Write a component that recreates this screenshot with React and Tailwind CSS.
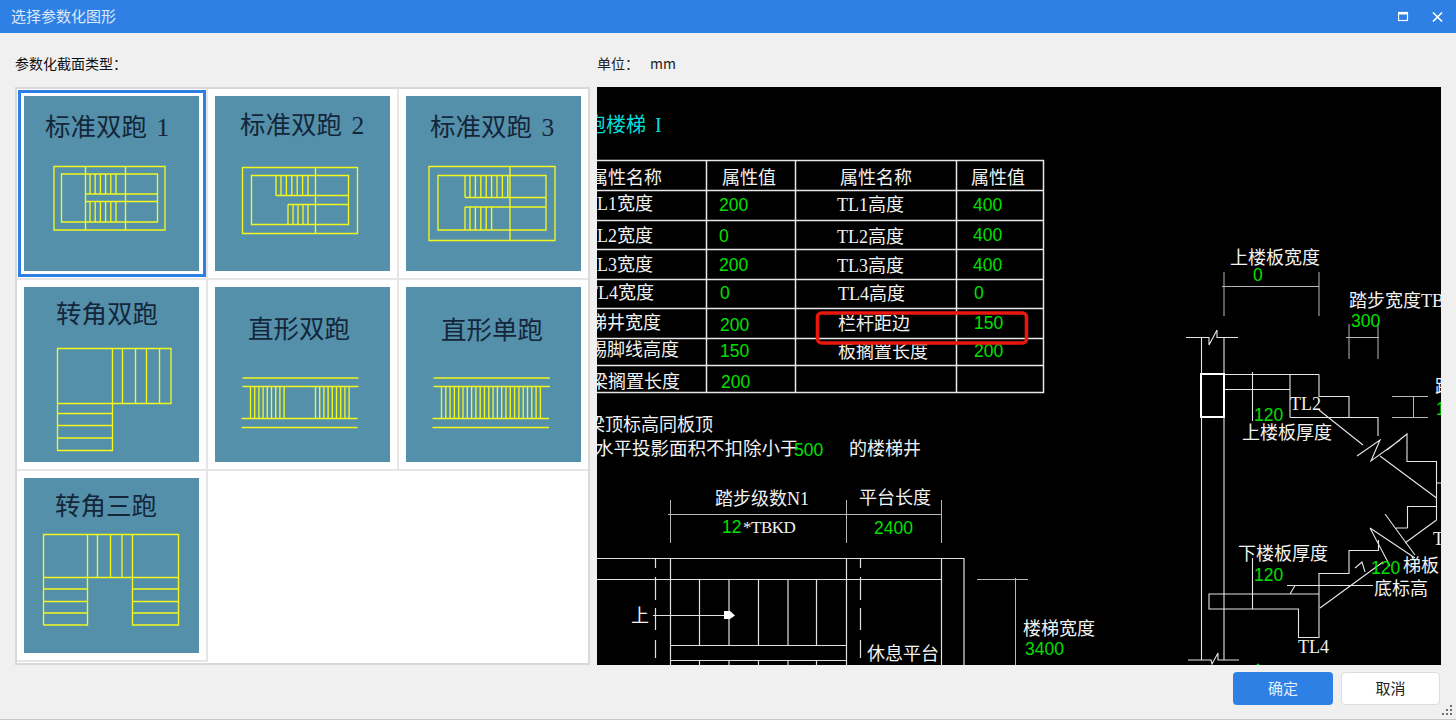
import React from "react";

const range = (start, step, n) => Array.from({ length: n }, (_, i) => start + i * step);
const h = (y, x1, x2) => `M${x1} ${y}H${x2}`;
const v = (x, y1, y2) => `M${x} ${y1}V${y2}`;
const rect = (x1, y1, x2, y2) => `M${x1} ${y1}H${x2}V${y2}H${x1}Z`;

// stair thumbnails, coordinates are inside the 175x175 picture
const THUMBS = [
  {
    title: "标准双跑 1",
    x: 21,
    y: 40,
    lines: [
      rect(30, 70.5, 141, 134),
      rect(37.5, 78, 133.5, 126),
      v(61.5, 70.5, 134),
      v(101.5, 70.5, 134),
      h(98, 61.5, 133.5),
      h(105.5, 61.5, 133.5),
      ...range(66, 5.2, 6).map((x) => v(x, 78, 98)),
      ...range(66, 5.2, 6).map((x) => v(x, 105.5, 126)),
    ],
  },
  {
    title: "标准双跑 2",
    x: 25,
    y: 38,
    lines: [
      rect(27.5, 71.5, 142.5, 137.5),
      rect(36.5, 79.5, 133.5, 128.5),
      v(100.5, 71.5, 137.5),
      v(61, 79.5, 99.5),
      v(73, 108.5, 128.5),
      h(99.5, 61, 133.5),
      h(108.5, 73, 133.5),
      ...range(66, 5.4, 6).map((x) => v(x, 79.5, 99.5)),
      ...range(78, 5, 4).map((x) => v(x, 108.5, 128.5)),
    ],
  },
  {
    title: "标准双跑 3",
    x: 24,
    y: 40,
    lines: [
      rect(23, 70.5, 149, 144.5),
      rect(32, 79.5, 140, 134),
      v(104, 70.5, 144.5),
      v(59, 79.5, 101.5),
      v(59, 111, 134),
      h(101.5, 59, 140),
      h(111, 59, 140),
      ...range(64, 5.4, 8).map((x) => v(x, 79.5, 101.5)),
      ...range(64, 5.4, 5).map((x) => v(x, 111, 134)),
    ],
  },
  {
    title: "转角双跑",
    x: 32,
    y: 36,
    lines: [
      `M33.5 61.5H147V116.5H88.5V163.5H33.5Z`,
      v(88.5, 61.5, 116.5),
      h(116.5, 33.5, 88.5),
      ...[98.5, 111.5, 122.5, 135.5].map((x) => v(x, 61.5, 116.5)),
      ...[126.5, 138.5, 151].map((y) => h(y, 33.5, 88.5)),
    ],
  },
  {
    title: "直形双跑",
    x: 33,
    y: 51,
    lines: [
      h(91, 27.5, 143.5),
      h(99.5, 27.5, 143.5),
      h(131.5, 26.5, 142.5),
      h(140.5, 26.5, 142.5),
      ...range(35.5, 4.2, 9).map((x) => v(x, 99.5, 131.5)),
      ...range(100.5, 4.2, 9).map((x) => v(x, 99.5, 131.5)),
    ],
  },
  {
    title: "直形单跑",
    x: 35,
    y: 52,
    lines: [
      h(91, 27.5, 144),
      h(99.5, 27.5, 144),
      h(131.5, 26.5, 143),
      h(140.5, 26.5, 143),
      ...range(35.5, 4.3, 24).map((x) => v(x, 99.5, 131.5)),
    ],
  },
  {
    title: "转角三跑",
    x: 31,
    y: 37,
    lines: [
      `M19.5 147V56.5H154.5V147H108.5V56.5M63.5 56.5V147H19.5`,
      h(99.5, 19.5, 154.5),
      ...[73.5, 86.5, 98].map((x) => v(x, 56.5, 99.5)),
      ...[111, 123.5, 135].map((y) => h(y, 19.5, 63.5)),
      ...[111, 123.5, 135].map((y) => h(y, 108.5, 154.5)),
    ],
  },
];

const Thumb = ({ t }) => (
  <svg
    viewBox="0 0 175 175"
    className="w-[175px] h-[175px] bg-[#5490aa] block font-['Liberation_Serif','Noto_Sans_CJK_SC',serif]"
  >
    <text x={t.x} y={t.y} fontSize="25.5" fill="#14263a" wordSpacing="3">
      {t.title}
    </text>
    <path d={t.lines.join("")} fill="none" stroke="#f2f71e" strokeWidth="1.35" />
  </svg>
);

const W = ({ x, y, s = 18, ls, children }) => (
  <text x={x} y={y} fontSize={s} fill="#f2f2f2" letterSpacing={ls}>
    {children}
  </text>
);
const G = ({ x, y, children }) => (
  <text x={x} y={y} fontSize="17.5" fill="#00e000" className="font-['Liberation_Sans',sans-serif]">
    {children}
  </text>
);

const Drawing = () => (
  <svg
    viewBox="597 87 844 578"
    className="w-[844px] h-[578px] bg-black block font-['Liberation_Serif','Noto_Sans_CJK_SC',serif]"
  >
    <text x="586" y="132" fontSize="20" fill="#00dede">
      跑楼梯
    </text>
    <text x="655" y="132" fontSize="20" fill="#00dede">
      I
    </text>

    {/* attribute table */}
    <path
      d={[
        rect(590, 160.5, 1043.5, 392.5),
        ...[706.5, 795.5, 956.5].map((x) => v(x, 160.5, 392.5)),
        ...[190.5, 220.5, 249.5, 279.5, 308.5, 338.5, 365.5].map((y) => h(y, 590, 1043.5)),
      ].join("")}
      fill="none"
      stroke="#e8e8e8"
      strokeWidth="1.5"
    />
    <W x={590} y={184}>属性名称</W>
    <W x={722} y={184}>属性值</W>
    <W x={840} y={184}>属性名称</W>
    <W x={971} y={184}>属性值</W>

    <W x={586} y={210}>TL1宽度</W>
    <G x={719} y={211}>200</G>
    <W x={837} y={211}>TL1高度</W>
    <G x={973} y={211}>400</G>

    <W x={586} y={242}>TL2宽度</W>
    <G x={719} y={242}>0</G>
    <W x={837} y={243}>TL2高度</W>
    <G x={973} y={241}>400</G>

    <W x={586} y={271}>TL3宽度</W>
    <G x={719} y={271}>200</G>
    <W x={837} y={272}>TL3高度</W>
    <G x={973} y={271}>400</G>

    <W x={587} y={299}>TL4宽度</W>
    <G x={720} y={299}>0</G>
    <W x={838} y={300}>TL4高度</W>
    <G x={974} y={299}>0</G>

    <W x={589} y={329}>梯井宽度</W>
    <G x={720} y={331}>200</G>
    <W x={838} y={330}>栏杆距边</W>
    <G x={974} y={329}>150</G>

    <W x={589} y={356}>踢脚线高度</W>
    <G x={720} y={357}>150</G>
    <W x={838} y={358}>板搁置长度</W>
    <G x={974} y={357}>200</G>

    <W x={590} y={388}>梁搁置长度</W>
    <G x={721} y={388}>200</G>

    <rect x="817.5" y="313" width="209" height="30" rx="4" fill="none" stroke="#e8190c" strokeWidth="3.6" />

    <W x={587} y={431}>梁顶标高同板顶</W>
    <W x={595} y={455} s={18.5}>水平投影面积不扣除小于</W>
    <G x={794} y={456}>500</G>
    <W x={849} y={455}>的楼梯井</W>

    {/* dimension lines */}
    <path
      d={[
        h(514.5, 668, 942),
        v(670.5, 500, 543),
        v(846.5, 500, 543),
        v(941.5, 500, 543),
        h(579.5, 977, 1028),
        v(1015.5, 578, 665),
        h(286.5, 1222, 1319),
        v(1224, 272, 316),
        v(1319, 272, 316),
        h(337.5, 1346, 1379),
        v(1349, 324, 359),
        v(1378, 324, 359),
        h(396.5, 1392, 1428),
        h(417.5, 1392, 1428),
        v(1413.5, 396, 418),
      ].join("")}
      fill="none"
      stroke="#b8b8b8"
    />
    <W x={715} y={505}>踏步级数N1</W>
    <W x={859} y={504}>平台长度</W>
    <G x={722} y={533}>12</G>
    <W x={743} y={533} s={17} ls={-0.5}>*TBKD</W>
    <G x={874} y={534}>2400</G>

    {/* stair plan */}
    <path
      d={[
        h(558.5, 597, 964),
        h(579.5, 597, 941.5),
        v(670.5, 558, 665),
        v(846.5, 558, 665),
        v(941.5, 558, 665),
        v(964, 558, 665),
        ...[699.5, 729, 758.5, 788, 816.5].map((x) => v(x, 579.5, 645.5)),
        ...[699.5, 729, 758.5, 788, 816.5].map((x) => v(x, 660.5, 665)),
        h(645.5, 670.5, 846.5),
        h(660.5, 670.5, 846.5),
        h(615.5, 653, 726),
      ].join("")}
      fill="none"
      stroke="#e0e0e0"
      strokeWidth="1.2"
    />
    <path
      d={`M655.5 558V568M655.5 577V600M655.5 608V630M655.5 640V658M860.5 558V568M860.5 577V600M860.5 608V630M860.5 640V658`}
      fill="none"
      stroke="#e0e0e0"
      strokeWidth="1.2"
    />
    <path d="M724 611H730L735 615.5L730 619H724Z" fill="#ffffff" />
    <W x={631} y={622}>上</W>
    <W x={867} y={660}>休息平台</W>
    <W x={1023} y={635}>楼梯宽度</W>
    <G x={1025} y={655}>3400</G>

    {/* section */}
    <path
      d={[
        `M1186 337.5H1209L1209 345L1217 330V337.5H1238`,
        `M1188 660H1211L1212 664L1218 653V660H1239`,
        v(1201.5, 337.5, 660),
        v(1224, 337.5, 660),
        h(374.5, 1224, 1319),
        h(389.5, 1224, 1290),
        v(1290, 374.5, 417.5),
        `M1290 417.5H1378V436`,
        `M1319 374.5V396.5H1349V417.5`,
        `M1319 410L1363 445`,
        `M1357 456L1380 440L1371 461L1400 440`,
        `M1387 450L1407 434V461.5H1436.5V520`,
        `M1436.5 483H1441M1407.5 528V506.5H1436.5`,
        `M1380 456L1436.5 498M1436.5 520L1405 543`,
        `M1407.5 528H1396`,
        `M1385 514L1415 555M1370 528L1415 558M1370 528L1390 566`,
        `M1378.5 540V550.5H1349V573.5H1319V637.5H1298.5V609H1209V594H1319`,
        `M1320 608L1383 562`,
        `M1287 585.5H1373M1295 585.5L1290 594M1355 568L1362 562L1365 572`,
        v(1252.5, 372, 421),
        v(1252.5, 558, 609),
      ].join("")}
      fill="none"
      stroke="#e6e6e6"
      strokeWidth="1.1"
    />
    <rect x="1201" y="374" width="23" height="43" fill="none" stroke="#ffffff" strokeWidth="2" />
    <circle cx="1258" cy="665" r="1.5" fill="#00e000" />

    <W x={1230} y={264}>上楼板宽度</W>
    <G x={1253} y={281}>0</G>
    <W x={1349} y={307}>踏步宽度TB</W>
    <G x={1351} y={327}>300</G>
    <W x={1435} y={393}>踏</W>
    <G x={1436} y={415}>1</G>
    <W x={1290} y={410}>TL2</W>
    <G x={1254} y={421}>120</G>
    <W x={1242} y={439}>上楼板厚度</W>
    <W x={1238} y={560}>下楼板厚度</W>
    <G x={1254} y={581}>120</G>
    <G x={1371} y={574}>120</G>
    <W x={1403} y={572}>梯板</W>
    <W x={1374} y={595}>底标高</W>
    <W x={1298} y={653}>TL4</W>
    <W x={1433} y={545}>T</W>
  </svg>
);

const App = () => {
  return (
    <div className="relative w-[1456px] h-[720px] flex flex-col overflow-hidden bg-[#f0f0f0] border-b border-[#c8c8c8] font-['Noto_Sans_CJK_SC',sans-serif]">
      {/* title bar */}
      <div className="h-[33px] shrink-0 bg-[#2f80e4] flex items-center pl-[11px] pr-[13px]">
        <span className="text-[15px] text-[#dce9fa]">选择参数化图形</span>
        <svg width="45" height="12" viewBox="0 0 45 12" className="ml-auto" fill="none" stroke="#ffffff">
          <rect x="0.5" y="1.5" width="9" height="8" strokeWidth="1.2" />
          <path d="M0.5 2.5H9.5" strokeWidth="2" />
          <path d="M35 1.5L44 10.5M44 1.5L35 10.5" strokeWidth="1.7" />
        </svg>
      </div>

      <div className="flex gap-[7px] pl-[15px] border-l border-[#d4d4d4] -ml-px">
        {/* section types */}
        <div className="w-[575px]">
          <div className="h-[54px] pt-5 text-[14px] leading-5 text-[#111111]">参数化截面类型：</div>
          <div className="relative h-[578px] bg-white border-2 border-[#d9d9d9]">
            <div className="grid grid-cols-[191px_191px_189px] auto-rows-[191px]">
              {THUMBS.map((t, i) => (
                <div
                  key={t.title}
                  className={
                    i % 3 === 2
                      ? "pl-[7px] pt-[7px] border-b-2 border-[#e6e6e6]"
                      : "pl-[7px] pt-[7px] border-r-2 border-b-2 border-[#e6e6e6]"
                  }
                >
                  <Thumb t={t} />
                </div>
              ))}
            </div>
            <div className="absolute left-px top-px w-[188px] h-[187px] border-[3px] border-[#2f80e4]" />
          </div>
        </div>

        {/* preview */}
        <div className="w-[844px]">
          <div className="h-[54px] pt-5 flex gap-[11px] text-[14px] leading-5 text-[#222222]">
            <span>单位：</span>
            <span>mm</span>
          </div>
          <Drawing />
        </div>
      </div>

      <div className="flex justify-end gap-2 pr-4 pt-[7px]">
        <button className="w-[100px] h-[33px] rounded-[4px] bg-[#2f80e4] text-[15px] text-[#e3eefb]">确定</button>
        <button className="w-[99px] h-[33px] rounded-[4px] bg-white border border-[#dcdcdc] text-[15px] text-[#222222]">
          取消
        </button>
      </div>

      {/* resize grip */}
      <svg width="11" height="11" viewBox="0 0 11 11" className="absolute right-[3px] bottom-[3px]" fill="#707070">
        <rect x="8" y="0" width="2" height="2" />
        <rect x="4" y="4" width="2" height="2" />
        <rect x="8" y="4" width="2" height="2" />
        <rect x="0" y="8" width="2" height="2" />
        <rect x="4" y="8" width="2" height="2" />
        <rect x="8" y="8" width="2" height="2" />
      </svg>
    </div>
  );
};

export default App;
